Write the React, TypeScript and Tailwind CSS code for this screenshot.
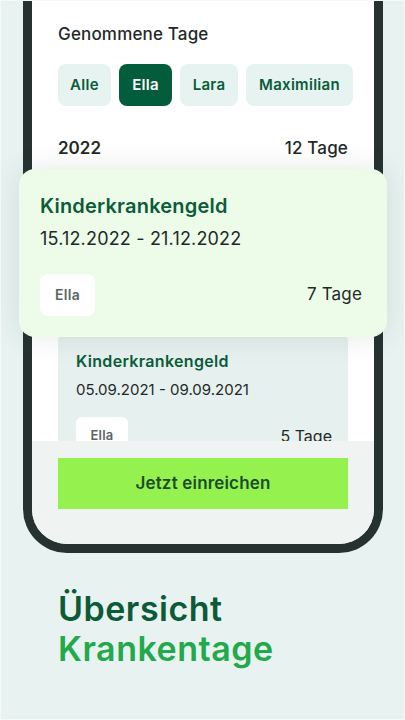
import React from "react";

const children = [
  { name: "Alle", width: "w-[53px]" },
  { name: "Ella", width: "w-[53px]" },
  { name: "Lara", width: "w-[58px]" },
  { name: "Maximilian", width: "w-[107px]" },
];

export default function App() {
  return (
    <div
      className="w-[405px] h-[720px] overflow-hidden bg-[#e8f3f1] border border-[#f4f9f8]"
      style={{ fontFamily: "Inter, 'Noto Sans', sans-serif" }}
    >
      {/* Phone frame */}
      <div className="ml-[22px] w-[360px] h-[552px] border-[9px] border-t-0 border-[#263230] rounded-b-[44px] bg-white flex flex-col">
        {/* Scroll area */}
        <div className="h-[440px] px-[26px] overflow-y-clip overflow-x-visible flex flex-col">
          <h2 className="pt-[21px] text-[17px] leading-6 font-medium tracking-[0.01em] text-[#1f2a28]">Genommene Tage</h2>

          {/* Child filter */}
          <div className="mt-[18px] flex gap-2 shrink-0">
            {children.map(({ name, width }) => (
              <button
                key={name}
                className={`${width} shrink-0 h-[42px] rounded-lg text-[15px] font-semibold tracking-[0.02em] ${
                  name === "Ella" ? "bg-[#035c3b] text-white" : "bg-[#e7f3f0] text-[#0b5c3a]"
                }`}
              >
                {name}
              </button>
            ))}
          </div>

          <div className="mt-[30px] flex justify-between text-[17px] leading-6 font-semibold text-[#1f2a28]">
            <span>2022</span>
            <span className="font-medium tracking-[0.01em]">12 Tage</span>
          </div>

          {/* Highlighted entry */}
          <div className="relative z-10 mt-[9px] -mx-[39px] rounded-2xl bg-[#edfbe9] pl-[21px] pr-[25px] pt-6 pb-[21px] shadow-[0_0_28px_rgba(30,60,50,0.12)]">
            <h3 className="text-[20px] leading-[26px] font-semibold tracking-[0.01em] text-[#0b5c3a]">Kinderkrankengeld</h3>
            <p className="mt-2 text-[18px] leading-6 tracking-[0.01em] text-[#1f2a28]">15.12.2022 - 21.12.2022</p>
            <div className="mt-[23px] flex items-center justify-between">
              <span className="h-[42px] w-[55px] flex items-center justify-center rounded-lg bg-white text-sm font-semibold tracking-[0.02em] text-[#5d6664]">
                Ella
              </span>
              <span className="text-[17px] tracking-[0.01em] text-[#1f2a28]">7 Tage</span>
            </div>
          </div>

          {/* Older entry */}
          <div className="-mt-[6px] rounded-[10px] bg-[#e6f0ee] pl-[18px] pr-4 pt-[19px] pb-4">
            <h3 className="text-base leading-[22px] font-semibold tracking-[0.02em] text-[#0b5c3a]">Kinderkrankengeld</h3>
            <p className="mt-2 text-[15px] leading-5 text-[#1f2a28]">05.09.2021 - 09.09.2021</p>
            <div className="mt-[17px] flex items-center justify-between">
              <span className="h-[38px] w-[52px] flex items-center justify-center rounded-md bg-white text-[13px] font-semibold tracking-[0.02em] text-[#5d6664]">
                Ella
              </span>
              <span className="text-base text-[#1f2a28]">5 Tage</span>
            </div>
          </div>
        </div>

        {/* Bottom action */}
        <div className="flex-1 rounded-b-[35px] bg-[#eff3f2] px-[26px] pt-[17px]">
          <button className="w-full h-[51px] bg-[#95f24e] text-[17px] font-semibold tracking-[0.01em] text-[#1b4d2c]">
            Jetzt einreichen
          </button>
        </div>
      </div>

      {/* Caption */}
      <div className="mt-[36px] pl-[57px] text-[34px] leading-10 font-semibold tracking-[0.015em]">
        <p className="text-[#0d5a37]">Übersicht</p>
        <p className="text-[#22a94b]">Krankentage</p>
      </div>
    </div>
  );
}
